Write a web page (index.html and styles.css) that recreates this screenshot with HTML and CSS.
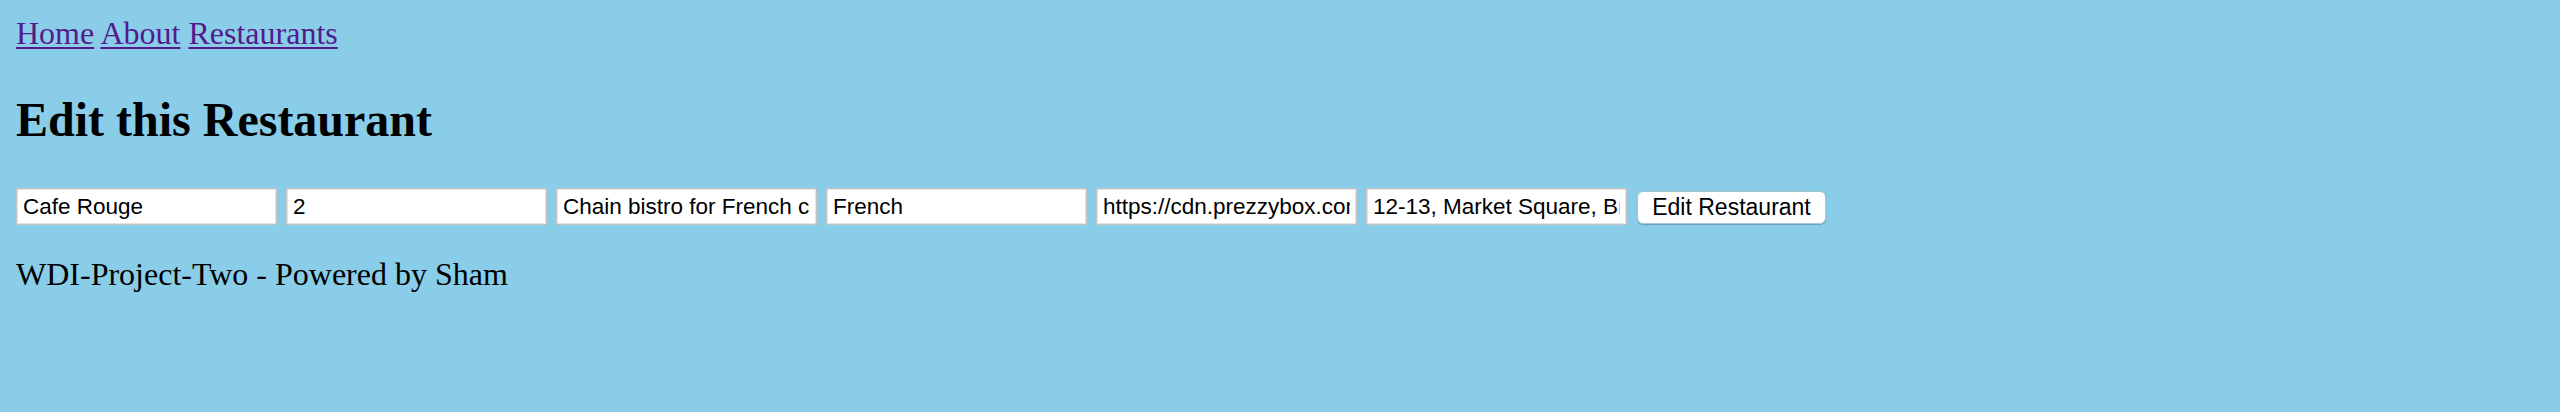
FILE: index.html
```html
<!DOCTYPE html>
<html lang="en">
<head>
<meta charset="utf-8">
<title>Edit this Restaurant</title>
<link rel="stylesheet" href="styles.css">
</head>
<body>
  <nav class="nav">
    <a href="#" class="nav-link">Home</a>
    <a href="#" class="nav-link">About</a>
    <a href="#" class="nav-link">Restaurants</a>
  </nav>
  <main>
    <h1 class="title">Edit this Restaurant</h1>
    <form class="edit-form">
      <input class="field" type="text" value="Cafe Rouge">
      <input class="field" type="text" value="2">
      <input class="field" type="text" value="Chain bistro for French classics">
      <input class="field" type="text" value="French">
      <input class="field" type="text" value="https://cdn.prezzybox.com/images/cafe-rouge.jpg">
      <input class="field" type="text" value="12-13, Market Square, Bromley">
      <button class="submit" type="button">Edit Restaurant</button>
    </form>
  </main>
  <footer class="footer">WDI-Project-Two - Powered by Sham</footer>
</body>
</html>
```

FILE: styles.css
```css
html, body {
  margin: 0;
  padding: 0;
}

body {
  background: #89cde9;
  font-family: "Liberation Serif", "Times New Roman", serif;
  color: #000;
  padding: 15px 16px 0 16px;
}

.nav {
  font-size: 32px;
  line-height: 37px;
  height: 37px;
}

.nav-link {
  color: #541a8b;
  text-decoration: underline;
  text-decoration-thickness: 2px;
  text-underline-offset: 3px;
}

.title {
  margin: 40px 0 0 0;
  font-size: 48px;
  line-height: 55px;
  font-weight: bold;
}

.edit-form {
  margin-top: 41px;
  display: flex;
  align-items: flex-start;
  gap: 9px;
}

.field {
  box-sizing: border-box;
  width: 261px;
  height: 37px;
  margin: 0;
  padding: 1px 6px 0 6px;
  border: 1px solid #c3c3c3;
  box-shadow: inset 0 0 0 1px #e4e4e4;
  background: #fff;
  font-family: "Liberation Sans", Arial, sans-serif;
  font-size: 22.5px;
  color: #000;
  outline: none;
}

.submit {
  box-sizing: border-box;
  margin: 3px 0 0 1px;
  width: 189px;
  height: 33px;
  padding: 0;
  border: 1px solid #a7c6d4;
  border-radius: 6px;
  background: #fff;
  box-shadow: 0 1px 1px rgba(0, 0, 0, 0.22);
  font-family: "Liberation Sans", Arial, sans-serif;
  font-size: 23px;
  color: #000;
}

.footer {
  margin-top: 31px;
  font-size: 32px;
  line-height: 37px;
}
```
